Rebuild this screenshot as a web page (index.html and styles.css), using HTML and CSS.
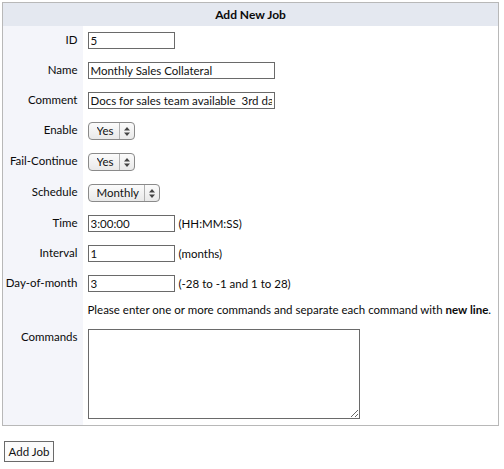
FILE: index.html
```html
<!DOCTYPE html>
<html>
<head>
<meta charset="utf-8">
<title>Add New Job</title>
<link rel="stylesheet" href="styles.css">
</head>
<body>
<form class="job-form">
  <table class="job-table">
    <colgroup><col class="c-lbl"><col class="c-val"></colgroup>
    <thead>
      <tr><th colspan="2" class="head">Add New Job</th></tr>
    </thead>
    <tbody>
      <tr>
        <td class="lbl">ID</td>
        <td class="val"><input class="txt w-short" type="text" value="5"></td>
      </tr>
      <tr>
        <td class="lbl">Name</td>
        <td class="val"><input class="txt w-long" type="text" value="Monthly Sales Collateral"></td>
      </tr>
      <tr>
        <td class="lbl">Comment</td>
        <td class="val"><input class="txt w-long" type="text" value="Docs for sales team available  3rd day of month"></td>
      </tr>
      <tr>
        <td class="lbl">Enable</td>
        <td class="val">
          <span class="sel-wrap w-yes">
            <select class="sel"><option>Yes</option><option>No</option></select>
            <svg class="sel-arrows" width="6" height="9" viewBox="0 0 6 9"><path d="M3 0 L6 3.5 L0 3.5 Z M3 9 L6 5.5 L0 5.5 Z" fill="#444"/></svg>
          </span>
        </td>
      </tr>
      <tr>
        <td class="lbl">Fail-Continue</td>
        <td class="val">
          <span class="sel-wrap w-yes">
            <select class="sel"><option>Yes</option><option>No</option></select>
            <svg class="sel-arrows" width="6" height="9" viewBox="0 0 6 9"><path d="M3 0 L6 3.5 L0 3.5 Z M3 9 L6 5.5 L0 5.5 Z" fill="#444"/></svg>
          </span>
        </td>
      </tr>
      <tr>
        <td class="lbl">Schedule</td>
        <td class="val">
          <span class="sel-wrap w-sched">
            <select class="sel"><option>Monthly</option><option>Weekly</option><option>Daily</option></select>
            <svg class="sel-arrows" width="6" height="9" viewBox="0 0 6 9"><path d="M3 0 L6 3.5 L0 3.5 Z M3 9 L6 5.5 L0 5.5 Z" fill="#444"/></svg>
          </span>
        </td>
      </tr>
      <tr>
        <td class="lbl">Time</td>
        <td class="val"><input class="txt w-short" type="text" value="3:00:00"><span class="hint">(HH:MM:SS)</span></td>
      </tr>
      <tr>
        <td class="lbl">Interval</td>
        <td class="val"><input class="txt w-short" type="text" value="1"><span class="hint">(months)</span></td>
      </tr>
      <tr>
        <td class="lbl">Day-of-month</td>
        <td class="val"><input class="txt w-short" type="text" value="3"><span class="hint">(-28 to -1 and 1 to 28)</span></td>
      </tr>
      <tr class="note-row">
        <td class="lbl"></td>
        <td class="val note">Please enter one or more commands and separate each command with <b>new line</b>.</td>
      </tr>
      <tr class="cmd-row">
        <td class="lbl">Commands</td>
        <td class="val"><textarea class="cmds"></textarea></td>
      </tr>
    </tbody>
  </table>
  <button type="button" class="btn">Add Job</button>
</form>
</body>
</html>
```

FILE: styles.css
```css
html, body {
  margin: 0;
  padding: 0;
  background: #ffffff;
}
body {
  padding: 2px;
  font-family: "Lato", "Open Sans", sans-serif;
  font-size: 11.5px;
  color: #0a0a0a;
}
.job-table {
  width: 497px;
  table-layout: fixed;
  border-collapse: collapse;
  border: 1px solid #b8b8b8;
}
.c-lbl { width: 80px; }
.head {
  height: 23px;
  padding: 0;
  background: #e4e8f0;
  font-weight: bold;
  font-size: 12px;
  text-align: center;
  vertical-align: middle;
}
.lbl {
  padding: 5px 5px 8px 0;
  background: #f4f5fa;
  text-align: right;
  vertical-align: top;
  line-height: 17px;
  white-space: nowrap;
}
.val {
  padding: 6px 5px 7px 5px;
  vertical-align: top;
  line-height: 17px;
  white-space: nowrap;
}
.txt {
  box-sizing: border-box;
  height: 17px;
  margin: 0;
  padding: 0 2px;
  border: 1px solid #6a6a6a;
  font-family: inherit;
  font-size: 11.5px;
  color: #111;
  vertical-align: top;
  background: #fff;
}
.w-short { width: 87px; }
.w-long { width: 187px; }
.hint {
  margin-left: 4px;
  vertical-align: top;
}
.sel-wrap {
  position: relative;
  display: inline-block;
  vertical-align: top;
  height: 18px;
}
.w-yes { width: 47px; }
.w-sched { width: 72px; }
.sel {
  -webkit-appearance: none;
  appearance: none;
  box-sizing: border-box;
  width: 100%;
  height: 18px;
  margin: 0;
  padding: 0 0 0 8px;
  border: 1px solid #8a8a8a;
  border-radius: 4px;
  background: linear-gradient(#fbfbfb, #e9e9e9);
  font-family: inherit;
  font-size: 11.5px;
  line-height: 16px;
  color: #111;
}
.sel-wrap::after {
  content: "";
  position: absolute;
  top: 1px;
  bottom: 1px;
  right: 15px;
  width: 1px;
  background: #b0b0b0;
  pointer-events: none;
}
.sel-arrows {
  position: absolute;
  right: 5px;
  top: 4.5px;
  pointer-events: none;
}
.note-row .lbl,
.note-row .val {
  padding-top: 4px;
  padding-bottom: 6px;
  line-height: 14px;
}
.note b { font-weight: bold; }
.cmd-row .lbl { padding-bottom: 7px; }
.cmd-row .val { padding-bottom: 6px; }
.cmds {
  display: block;
  box-sizing: border-box;
  width: 272px;
  height: 90px;
  margin: 0;
  border: 1px solid #6a6a6a;
  font-family: inherit;
  font-size: 12px;
}
.btn {
  display: block;
  box-sizing: border-box;
  margin: 15px 0 0 2px;
  width: 50px;
  height: 21px;
  padding: 0;
  border: 1px solid #6a6a6a;
  background: #fbfbfb;
  font-family: inherit;
  font-size: 11.5px;
  color: #111;
}
```
